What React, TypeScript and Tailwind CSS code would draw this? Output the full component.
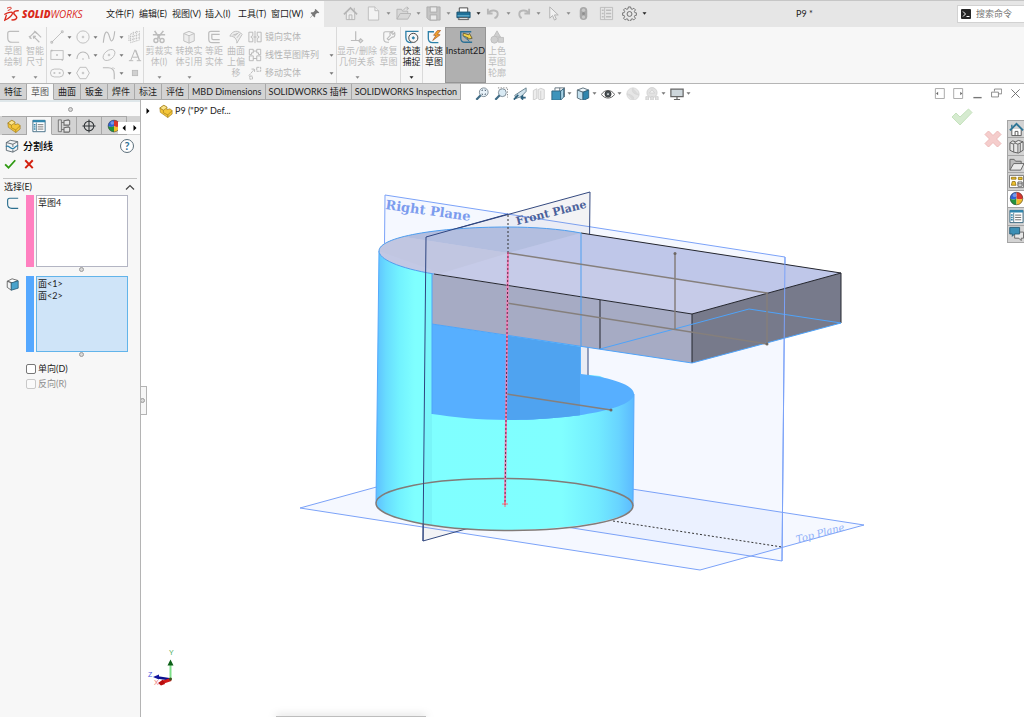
import type { ReactNode } from "react";
import clsx from "clsx";

type IconProps = { children: ReactNode; className?: string };

const Icon = ({ children, className = "size-4" }: IconProps) => (
  <svg
    viewBox="0 0 16 16"
    fill="none"
    stroke="currentColor"
    className={clsx("block shrink-0", className)}
    aria-hidden="true"
  >
    {children}
  </svg>
);

const Caret = ({ className = "text-[#777777]" }: { className?: string }) => (
  <svg viewBox="0 0 5 3" className={clsx("block h-[3px] w-[5px] shrink-0", className)} aria-hidden="true">
    <path d="M0.5 0.3h4L2.5 2.8z" fill="currentColor" />
  </svg>
);

const Divider = () => <div className="w-px shrink-0 self-stretch bg-[#dadada]" />;

/* ---------- icons ---------- */

const LogoMark = () => (
  <svg viewBox="0 0 30 32" className="block h-4 w-[15px] shrink-0" fill="none" stroke="#da291c" aria-hidden="true">
    <path d="M6 4.500c5-2.500 9-2.500 8.500 0-.5 2-3.500 3.500-7 4.500" strokeWidth="2" />
    <path d="M.5 17C7 14 12 12 15 12.500c3.500.8 1.500 5-2 8.500-3 3-7 5.500-11.500 7.500L5 17.500" strokeWidth="2.600" />
    <path d="M29.500 9.500c-6-.8-10 1-10 4.500 0 4 6 5 6 9 0 3.500-5 5.500-10.500 4.500" strokeWidth="3" />
  </svg>
);

const icons = {
  pin: (
    <g fill="#777" stroke="none">
      <path d="M9.500 1.500l5.500 5-1.500 1-1.800-.3-2.700 2.600.1 2.700-1.200 1.200-2.700-2.700L1.800 14.500 1.500 14l3.500-4L2.300 7.300l1.200-1.200 2.700.1 2.500-2.500-.2-1.500z" />
    </g>
  ),
  home: (
    <g stroke="#b4b4b4">
      <path d="M3.500 7.500v7h9v-7" fill="#ededed" />
      <path d="M6.500 14.500v-5h3v5M12 2v3" />
      <path d="M1 9l7-7 7 7" strokeWidth="1.800" />
    </g>
  ),
  page: (
    <g stroke="#bdbdbd" fill="#f3f3f3">
      <path d="M2.500 1h7L13.500 5v10h-11z" />
      <path d="M9.500 1v4h4" />
    </g>
  ),
  open: (
    <g stroke="#b4b4b4" fill="#d8d8d8">
      <path d="M1 14V3.500h5l1 2h5.500v3M1 14l3.500-6H16l-3.500 6z" />
      <path d="M8 4.500c1-2.500 3-3 5-2M11.500 .8l2 1.800-2.200 1.500" fill="none" />
    </g>
  ),
  save: (
    <g stroke="#adadad" fill="#c4c4c4">
      <path d="M1 1h14v14H3.500L1 12.500z" />
      <path d="M4.500 1h7v5.500h-7zM4.500 9.500h7V15h-7z" fill="#eaeaea" />
    </g>
  ),
  print: (
    <>
      <path d="M3.500 7V2h9v5" fill="#fff" stroke="#444" />
      <path d="M1 6.500h14v6H1z" fill="#1f7199" stroke="#174f6d" />
      <path d="M1.500 10.500h13" stroke="#7cc3e0" />
      <path d="M3.500 12.500h9l1 2h-11z" fill="#fff" stroke="#555" />
    </>
  ),
  undo: (
    <path d="M2 3v5h5M2.500 7.500C5 3.500 12.500 4 12.500 8.500c0 2.500-1.500 4-3.500 4.500" stroke="#b7b7b7" strokeWidth="2" />
  ),
  redo: (
    <path d="M14 3v5H9M13.500 7.500C11 3.500 3.500 4 3.500 8.500c0 2.500 1.500 4 2.500 4.500" stroke="#b7b7b7" strokeWidth="2" />
  ),
  cursor: <path d="M4 1v12l3-2.800 2 4.800 2-1-2-4.500h4z" stroke="#b0b0b0" fill="#f1f1f1" />,
  traffic: (
    <g stroke="none">
      <rect x="4" y="1" width="8" height="14" rx="4" fill="#a9a9a9" />
      <circle cx="8" cy="4.500" r="1.800" fill="#c9c9c9" />
      <circle cx="8" cy="8.200" r="1.500" fill="#8f8f8f" />
      <circle cx="8" cy="11.800" r="1.800" fill="#c9c9c9" />
    </g>
  ),
  options: (
    <g stroke="#bcbcbc">
      <path d="M1.500 1.500h13v13h-13zM6 1.500v13" />
      <path d="M3 4.500h2M3 8h2M3 11.500h2M7.500 4.500H13M7.500 8H13M7.500 11.500H13" strokeWidth="1.500" />
    </g>
  ),
  gear: (
    <g stroke="#6a6a6a">
      <path d="M6.800 1h2.400l.4 2 1.300.5 1.700-1.100 1.700 1.700-1.100 1.700.5 1.300 2 .4v2.200l-2 .4-.5 1.300 1.100 1.700-1.700 1.700-1.700-1.100-1.300.5-.4 2H6.800l-.4-2-1.300-.5-1.700 1.100-1.700-1.700 1.100-1.700-.5-1.300-2-.4V7.500l2-.4.5-1.300-1.100-1.700 1.700-1.700 1.700 1.100L6.400 3z" />
      <circle cx="8" cy="8.500" r="2.600" />
    </g>
  ),
  sketch: <path d="M15 1.500H4.500Q2 1.500 2 4v5q0 5 5 5h8" strokeWidth="1.400" />,
  dimension: (
    <path d="M1.500 8.500L8 2M8.500 2l6.500 6.500M1 7l3 3M4 10l-2.500-1.500M13 14L6 7M6 7l.5 3M6 7l3 .3M7 1l3 3" strokeWidth="1.300" />
  ),
  line: <path d="M2 14L14 2M1 13h2v2H1zM13 1h2v2h-2z" />,
  circle: (
    <>
      <circle cx="8" cy="8" r="7" />
      <circle cx="8" cy="8" r="1" />
    </>
  ),
  spline: <path d="M1.500 14.500C2.500 5 4 .5 6.500 3S9 13 11 12.500s3-5 3.500-11" strokeWidth="1.300" />,
  plane: (
    <path d="M3 4.500l10-3v10l-10 3zM1 6v7M6 2v11M9.500 1v11M2 8l12-3M2 11.500l12-3" strokeDasharray="1.500 1" />
  ),
  rect: (
    <>
      <rect x="1" y="3" width="14" height="10" />
      <path d="M7 8h2M14 12.500v2M2 2v2" strokeWidth="1.500" />
    </>
  ),
  arc: <path d="M1 12.500a7 8 0 0 1 14 0M7 12.500h2" strokeWidth="1.200" />,
  ellipse: (
    <>
      <ellipse cx="8" cy="8" rx="7.800" ry="5" transform="rotate(-40 8 8)" />
      <circle cx="8" cy="8" r="1" />
    </>
  ),
  letter: <path d="M1 14.500h5M10 14.500h5M3 14.500L8 2l5 12.500M5 10.500h6M9 2.500l4 11" strokeWidth="1.100" />,
  slot: (
    <>
      <rect x=".5" y="3.500" width="15" height="9" rx="4.500" />
      <path d="M4 8h2M10 8h2" strokeWidth="1.500" />
    </>
  ),
  polygon: (
    <>
      <path d="M4.500 1.500h7L15.300 8l-3.800 6.500h-7L.7 8z" />
      <circle cx="8" cy="8" r="1" />
    </>
  ),
  fillet: <path d="M1 2h6q7 0 7 7v6M14 2.500v1M12 2h1" strokeWidth="1.300" />,
  point: <rect x="5" y="5" width="6" height="6" fill="#d0d0d0" />,
  trim: (
    <>
      <path d="M3 1l6 9M13 1L6 10M1 5.500h14" strokeWidth="1.800" />
      <circle cx="4.500" cy="12" r="2.300" strokeWidth="1.600" />
      <circle cx="11.500" cy="12" r="2.300" strokeWidth="1.600" />
    </>
  ),
  convert: <path d="M2 4l6-2.500L14 4v8.500L8 15l-6-2.500zM2 4l6 2.500L14 4M8 6.500V15" fill="#ededed" />,
  offset: <path d="M14.500 1.500H4.500Q2 1.500 2 4v6.500q0 4 4 4h8.500M14.500 5H5.500v4.500Q5.500 11 7 11h7.500" strokeWidth="1.400" />,
  surface: <path d="M1 7c3-7 10-7 14-2l-6 10c0-5-3-8-8-8zM6 7l5-4M9 9l4-5M4 6l6-2" fill="#eeeeee" />,
  mirror: <path d="M1 2.500h4.500v4l-2 1v1l2 1v4H1zM15 2.500h-4.500v4l2 1v1l-2 1v4H15zM8 1v14M6 8h4" />,
  pattern: (
    <path d="M1.500 1.500H6v4H4v2H1.500zM10 1.500h4.500v6H12v-2h-2zM1.500 9H6v5.500H1.500zM10 9h4.500v5.500H10zM6 3.500h4M6 12h4" />
  ),
  move: <path d="M1 11l6-7M4 3.500h3.500V7M10 1.500h4.500v4.500H10zM2 11.500h3V15H2z" strokeDasharray="3 .7" />,
  relation: <path d="M6.500 1.500v10M1 12h11M12 10l2.500 2.200L12 14.500l-2-2.300z" strokeWidth="1.400" />,
  repair: (
    <path d="M10 2H4Q2 2 2 4v6q0 4 4 4h2M14.500 3l-2 2-1.500-1.500 1.500-2C9 1.500 8.500 4 9.500 6L6 10l1.500 1.500L11.500 8c2 .5 4-1 3-5z" strokeWidth="1.300" />
  ),
  snap: (
    <>
      <path d="M15.500 1.500H1v7q0 6 6.500 6" stroke="#2c7fa8" strokeWidth="1.500" />
      <circle cx="9.500" cy="9" r="5.200" stroke="#333" />
      <circle cx="9.500" cy="9" r="1.200" fill="#2c7fa8" stroke="#2c7fa8" />
    </>
  ),
  rapid: (
    <>
      <path d="M8 2H1.500v7.500q0 5 5 5H13" stroke="#2c7fa8" strokeWidth="1.500" />
      <path d="M12 .5L7.500 6l2.700.3L6.500 12l8.500-6.500-3.200-.5L15.500.5z" fill="#f3a229" stroke="#a3572b" strokeWidth=".8" />
    </>
  ),
  instant: (
    <>
      <path d="M14 2H2v7q0 5 5 5h8" stroke="#2a7095" strokeWidth="1.500" />
      <path d="M5 3.500l6 2 1-1.500 3 5.500-5.500 1 1-1.500L4.500 6.500z" fill="#f1d34c" stroke="#4a4424" strokeWidth=".8" />
      <path d="M5 7l7 6" stroke="#2a7095" />
    </>
  ),
  shaded: (
    <g fill="#cfcfcf" stroke="#bdbdbd">
      <path d="M8 1l4 7H4z" />
      <circle cx="5" cy="11" r="4" />
      <path d="M9.500 8.500h6V14h-6z" />
    </g>
  ),
  zoomFit: (
    <>
      <circle cx="10" cy="6" r="5" stroke="#77858f" fill="#e7f1f8" />
      <path d="M1.500 14.500l5-5" stroke="#3f6c86" strokeWidth="2.500" />
      <path d="M8 4.500v-1h1M11 3.500h1v1M12 7.500v1h-1M9 8.500H8v-1" stroke="#456" />
    </>
  ),
  zoomArea: (
    <>
      <path d="M4.500 1h11v11" stroke="#777" strokeDasharray="1.500 1.500" />
      <circle cx="9.500" cy="6.500" r="4.500" stroke="#77858f" fill="#d9eaf4" />
      <path d="M1.500 14.500l5-5" stroke="#3f6c86" strokeWidth="2.500" />
    </>
  ),
  prevView: (
    <>
      <path d="M15 1l-7 4.500-6 4 1.500 3.500 6-2L15 5z" fill="#cfe2ec" stroke="#5e7886" />
      <path d="M1 14.500L6 9M14.500 12H9M9 12l2.500-2.500M9 12l2.500 2.500" stroke="#30637f" strokeWidth="2" />
    </>
  ),
  section: <path d="M1.500 4l4-2v11l-4 2zM7 3l3-1.500 4 1.500v10.500l-4 1.500-3-1.500zM10 4.500V15" stroke="#cccccc" fill="#ededed" />,
  orient: (
    <>
      <path d="M4.500 1h11v10.500M4.500 1v3M15.500 1l-4 3.500M10 1v4M8 8h7.500" stroke="#566873" />
      <path d="M1 4.500h10V15H1z" fill="#3d94bb" stroke="#2b5f79" />
      <path d="M11 4.500l3.500-2.500v9.500L11 15z" fill="#a9d3e6" stroke="#2b5f79" />
    </>
  ),
  display: (
    <>
      <path d="M1.500 3.500L8 1l6.500 2.500L8 6z" fill="#eef7fb" stroke="#4f6470" />
      <path d="M1.500 3.500L8 6v9.500l-6.500-3z" fill="#c3e0ee" stroke="#4f6470" />
      <path d="M14.500 3.500L8 6v9.500l6.500-3z" fill="#2f86ae" stroke="#2b5f79" />
    </>
  ),
  eye: (
    <>
      <path d="M.5 8.500C4 2.500 12 2.500 15.500 8.500 12 14 4 14 .5 8.500z" stroke="#555" fill="#fff" />
      <circle cx="8" cy="8" r="3.500" fill="#4a5358" stroke="#333" />
      <circle cx="8" cy="8" r="1" fill="#fff" stroke="none" />
    </>
  ),
  ball: (
    <g stroke="#d6d6d6">
      <circle cx="8" cy="8" r="7" fill="#e6e6e6" />
      <path d="M8 1C6 5 8 8 15 9M8 15C10 12 8 9 1 8" fill="#dadada" />
    </g>
  ),
  scene: (
    <g stroke="#d0d0d0" fill="#e2e2e2">
      <circle cx="8" cy="6.500" r="5.800" />
      <path d="M1 11h3v4H1zM6.500 11h3v4h-3zM12 11h3v4h-3z" />
      <path d="M5 7l3-4 3 4z" fill="#f1f1f1" />
    </g>
  ),
  monitor: (
    <>
      <path d="M1 2.500h14v8.500H1z" fill="#cdd6db" stroke="#666" strokeWidth="1.400" />
      <path d="M8 11v3M4.500 14.500h7" stroke="#666" strokeWidth="1.400" />
    </>
  ),
  part: (
    <g stroke="#9a7413" strokeWidth=".7">
      <path d="M1 4.500l4.500-3L9 3.500v3l3.500-1 2.500 2v4L10 15.500l-8.500-6z" fill="#f4c63a" />
      <path d="M1 4.500l4 2.500v3l5 2.500 5-5" fill="none" />
      <path d="M10 12.500v3" />
      <path d="M5 7l4-2.500v-1l-3.500-2-4.500 3z" fill="#fbe48a" />
    </g>
  ),
  property: (
    <>
      <path d="M1 1.500h14v13H1z" fill="#fff" stroke="#37657e" />
      <path d="M1 2.500h14" stroke="#2f86ae" strokeWidth="2.500" />
      <path d="M5 4v10" stroke="#5e7d8e" />
      <path d="M2 6.500h2M2 9h2M2 11.500h2" stroke="#2f86ae" strokeWidth="1.600" />
      <path d="M6.500 6.500H13M6.500 9H13M6.500 11.500H13" stroke="#666" />
    </>
  ),
  config: (
    <g stroke="#6b6b6b">
      <path d="M1.500 1h3.500v13.500H1.500zM5 4h3M5 12h3" fill="#dedede" />
      <path d="M8 2l5-1 1.500 1v4l-1 1H8zM8 10l5-1 1.500 1v4l-1 1H8z" fill="#e4e4e4" strokeWidth="1.200" />
    </g>
  ),
  target: (
    <g stroke="#2f3336" strokeWidth="1.200">
      <circle cx="8" cy="8" r="5.500" />
      <path d="M8 .5v15M.5 8h15" />
    </g>
  ),
  sphere: (
    <g stroke="none">
      <path d="M8 1a7 7 0 0 0-7 7q4 2 7 0z" fill="#2f62d8" />
      <path d="M8 1a7 7 0 0 1 7 7q-4 2-7 0z" fill="#d9352c" />
      <path d="M1 8a7 7 0 0 0 7 7V8q-3 2-7 0z" fill="#22933c" />
      <path d="M15 8a7 7 0 0 1-7 7V8q3 2 7 0z" fill="#f0bd2b" />
      <circle cx="6" cy="4.500" r="2" fill="#fff" opacity=".35" />
      <circle cx="8" cy="8" r="6.700" fill="none" stroke="#444" strokeWidth=".6" />
    </g>
  ),
  split: (
    <>
      <path d="M1.500 4L6 1.500l8.500 1.500v9L9 15l-7.500-2z" fill="#f2f4f5" stroke="#55616a" />
      <path d="M1.500 4L9 6l5.500-3M9 6v3M9 12v3" stroke="#55616a" />
      <path d="M1 8.500c3-2 5.500 3 8 2.500s3-3.500 6-3.500" stroke="#2c7fa8" strokeWidth="1.500" />
    </>
  ),
  face: (
    <>
      <path d="M1.500 4l6-3 7 2-6 3z" fill="#fff" stroke="#555" />
      <path d="M1.500 4l5 2v9l-5-3.500z" fill="#f3f5f6" stroke="#555" />
      <path d="M6.500 6l8.500-2.500v9L6.500 15z" fill="#4aa3cc" stroke="#2b5f79" />
    </>
  ),
  houseBlue: (
    <>
      <path d="M3 7.500v7h10v-7" fill="#fff" stroke="#555" />
      <path d="M6.500 14.500V10h3v4.500" stroke="#555" />
      <path d="M1 9l7-7 7 7" stroke="#2d7596" strokeWidth="2" />
      <path d="M3 3v3" stroke="#2d7596" strokeWidth="1.500" />
    </>
  ),
  library: (
    <g stroke="#5f5f5f" fill="#e6e6e6">
      <path d="M1 4l3-2 3 1 3-1.500L15 3v9l-5 3-5-1-4-2z" />
      <path d="M1 4l4 1.500v8.500M5 5.500L7 3M9.500 5.500V15M9.500 5.500l-3-1M9.500 5.500L15 3M12 4.500V14" fill="none" />
    </g>
  ),
  folder: (
    <g stroke="#646464">
      <path d="M1 14V2.500h4.500l1.500 2h6v3" fill="#bcbcbc" />
      <path d="M1 14l4-7h11l-3.500 7z" fill="#eaeaea" />
    </g>
  ),
  palette: (
    <>
      <path d="M.5 1.500h15v13H.5z" fill="#fff" stroke="#777" />
      <path d="M2.500 3.500h5v2h-5zM10 3.500h4v2.500h-4zM3.500 8h3l1 4h-5z" fill="#f0c22e" stroke="#87680c" strokeWidth=".8" />
      <path d="M9.500 8.500H14V13H9.500zM9.500 10.500H14" stroke="#555" />
    </>
  ),
  forum: (
    <>
      <path d="M6 6.500h9.500v6.500H13v2.500L10.500 13H6z" fill="#e6e6e6" stroke="#666" />
      <path d="M.8 1.500h10.500v7H6L3.500 11V8.500H.8z" fill="#3c8fb5" stroke="#2b5f79" />
    </>
  ),
  panelLeft: (
    <>
      <path d="M2 .8h13v14.500H2z" stroke="#9a9a9a" strokeWidth="1.200" />
      <path d="M3 8l3-2.500v5z" fill="#666" stroke="none" />
    </>
  ),
  panelRight: (
    <>
      <path d="M1 .8h13v14.500H1z" stroke="#9a9a9a" strokeWidth="1.200" />
      <path d="M13.500 8l-3-2.500v5z" fill="#666" stroke="none" />
    </>
  ),
  minimize: <path d="M2 14h12" stroke="#777" strokeWidth="2" />,
  restore: <path d="M5 5V1.500h10.500v7H11M.8 6h10v7H.8z" stroke="#777" strokeWidth="1.200" />,
  close: <path d="M2 2l12 12M14 2L2 14" stroke="#666" strokeWidth="1.300" />,
};

type IconName = keyof typeof icons;

/* ---------- title bar ---------- */

const menus = ["文件(F)", "编辑(E)", "视图(V)", "插入(I)", "工具(T)", "窗口(W)"];

const quickTools: { icon: IconName; label: string; caret?: boolean; dark?: boolean }[] = [
  { icon: "home", label: "主页" },
  { icon: "page", label: "新建", caret: true },
  { icon: "open", label: "打开", caret: true },
  { icon: "save", label: "保存", caret: true },
  { icon: "print", label: "打印", caret: true, dark: true },
  { icon: "undo", label: "撤销", caret: true },
  { icon: "redo", label: "重做", caret: true },
  { icon: "cursor", label: "选择", caret: true },
  { icon: "traffic", label: "重建模型" },
  { icon: "options", label: "文件属性" },
  { icon: "gear", label: "选项", caret: true, dark: true },
];

const TitleBar = () => (
  <header className="flex h-[27px] shrink-0 items-stretch border-t border-[#c6c6c6] bg-[#e6e6e6]">
    <div className="flex w-[324px] shrink-0 items-center bg-[#f8f8f8] pb-px pl-1">
      <LogoMark />
      <span className="ml-[3px] w-[84px] font-['Open_Sans'] text-[10px] leading-3 italic text-[#da291c]">
        <b className="font-extrabold">SOLID</b>WORKS
      </span>
      <nav className="flex flex-1">
        {menus.map((menu) => (
          <button key={menu} className="w-[33px] shrink-0 text-left text-[9px] leading-3 whitespace-nowrap text-[#1c1c1c]">
            {menu}
          </button>
        ))}
      </nav>
      <button aria-label="固定菜单" className="mr-1">
        <Icon className="size-[11px]">{icons.pin}</Icon>
      </button>
    </div>
    <div className="flex shrink-0 items-center pb-px pl-[19px]">
      {quickTools.map(({ icon, label, caret, dark }) => (
        <button
          key={icon}
          aria-label={label}
          className={clsx("flex items-center", caret ? "w-[30px] gap-[5px]" : "w-[23px]")}
        >
          <Icon className="size-[15px]">{icons[icon]}</Icon>
          {caret && <Caret className={dark ? "text-[#222222]" : "text-[#8a8a8a]"} />}
        </button>
      ))}
    </div>
    <h1 className="flex flex-1 items-center justify-center pb-px text-[9px] text-[#222222]">P9 *</h1>
    <label className="my-1 flex w-[67px] shrink-0 items-center border border-r-0 border-[#d2d2d2] bg-white pl-[3px]">
      <svg viewBox="0 0 10 10" className="block size-[10px] shrink-0" aria-hidden="true">
        <rect width="10" height="10" rx="1" fill="#262626" />
        <path d="M2 2.500l2.500 2.500L2 7.500M5.500 7.500h3" fill="none" stroke="#fff" />
      </svg>
      <input
        aria-label="搜索命令"
        placeholder="搜索命令"
        className="ml-[5px] w-0 flex-1 text-[9px] leading-3 outline-none placeholder:text-[#777777]"
      />
    </label>
  </header>
);

/* ---------- ribbon ---------- */

type BigToolProps = {
  icon: IconName;
  lines: string[];
  width: string;
  caret?: boolean;
  enabled?: boolean;
  pressed?: boolean;
};

const BigTool = ({ icon, lines, width, caret, enabled, pressed }: BigToolProps) => (
  <button
    disabled={!enabled}
    className={clsx(
      "flex shrink-0 flex-col items-center pt-[2px] pb-1 text-[9px] leading-[11px] whitespace-nowrap",
      width,
      enabled ? "text-[#1c1c1c]" : "text-[#bcbcbc]",
      pressed && "bg-[#b0b0b0] outline outline-[#959595] -outline-offset-1"
    )}
  >
    <Icon className="my-[1px] size-[14px]">{icons[icon]}</Icon>
    {lines.map((line) => (
      <span key={line}>{line}</span>
    ))}
    {caret && (
      <span className="mt-auto">
        <Caret className={enabled ? "text-[#222222]" : "text-[#8a8a8a]"} />
      </span>
    )}
  </button>
);

const sketchRows: { icon: IconName; label: string; caret?: boolean }[][] = [
  [
    { icon: "line", label: "直线", caret: true },
    { icon: "circle", label: "圆", caret: true },
    { icon: "spline", label: "样条曲线", caret: true },
    { icon: "plane", label: "基准面" },
  ],
  [
    { icon: "rect", label: "矩形", caret: true },
    { icon: "arc", label: "圆弧", caret: true },
    { icon: "ellipse", label: "椭圆", caret: true },
    { icon: "letter", label: "文字" },
  ],
  [
    { icon: "slot", label: "槽口", caret: true },
    { icon: "polygon", label: "多边形" },
    { icon: "fillet", label: "圆角", caret: true },
    { icon: "point", label: "点" },
  ],
];

const entityTools: { icon: IconName; label: string; caret?: boolean }[] = [
  { icon: "mirror", label: "镜向实体" },
  { icon: "pattern", label: "线性草图阵列", caret: true },
  { icon: "move", label: "移动实体", caret: true },
];

const Ribbon = () => (
  <section className="flex h-14 shrink-0 items-stretch bg-[#f7f7f7] pl-[2px]">
    <BigTool icon="sketch" lines={["草图", "绘制"]} width="w-[22px]" caret />
    <BigTool icon="dimension" lines={["智能", "尺寸"]} width="w-[22px]" caret />
    <Divider />
    <div className="flex w-24 shrink-0 flex-col justify-center pl-[3px] text-[#b9b9b9]">
      {sketchRows.map((row, i) => (
        <div key={i} className="flex h-[18px] items-center">
          {row.map(({ icon, label, caret }) => (
            <button key={icon} disabled aria-label={label} className="flex w-[26px] shrink-0 items-center gap-[3px]">
              <Icon className="size-[14px]">{icons[icon]}</Icon>
              {caret && <Caret />}
            </button>
          ))}
        </div>
      ))}
    </div>
    <Divider />
    <BigTool icon="trim" lines={["剪裁实", "体(I)"]} width="w-[30px]" caret />
    <BigTool icon="convert" lines={["转换实", "体引用"]} width="w-[30px]" caret />
    <BigTool icon="offset" lines={["等距", "实体"]} width="w-5" />
    <BigTool icon="surface" lines={["曲面", "上偏", "移"]} width="w-6" />
    <div className="flex w-[88px] shrink-0 flex-col justify-center text-[9px] text-[#b4b4b4]">
      {entityTools.map(({ icon, label, caret }) => (
        <button key={icon} disabled className="flex h-[18px] items-center gap-[3px] pr-[2px] whitespace-nowrap">
          <Icon className="size-[14px]">{icons[icon]}</Icon>
          {label}
          {caret && (
            <span className="ml-auto">
              <Caret />
            </span>
          )}
        </button>
      ))}
    </div>
    <Divider />
    <BigTool icon="relation" lines={["显示/删除", "几何关系"]} width="w-10" caret />
    <BigTool icon="repair" lines={["修复", "草图"]} width="w-[23px]" />
    <Divider />
    <BigTool icon="snap" lines={["快速", "捕捉"]} width="w-[21px]" caret enabled />
    <Divider />
    <BigTool icon="rapid" lines={["快速", "草图"]} width="w-[22px]" enabled />
    <BigTool icon="instant" lines={["Instant2D"]} width="w-[41px]" enabled pressed />
    <BigTool icon="shaded" lines={["上色", "草图", "轮廓"]} width="w-[22px]" />
  </section>
);

/* ---------- command tabs and view toolbar ---------- */

const commandTabs = [
  "特征",
  "草图",
  "曲面",
  "钣金",
  "焊件",
  "标注",
  "评估",
  "MBD Dimensions",
  "SOLIDWORKS 插件",
  "SOLIDWORKS Inspection",
];

const viewTools: { icon: IconName; label: string; caret?: boolean }[] = [
  { icon: "zoomFit", label: "整屏显示全图" },
  { icon: "zoomArea", label: "局部放大" },
  { icon: "prevView", label: "上一视图" },
  { icon: "section", label: "剖面视图" },
  { icon: "orient", label: "视图定向", caret: true },
  { icon: "display", label: "显示样式", caret: true },
  { icon: "eye", label: "隐藏/显示项目", caret: true },
  { icon: "ball", label: "编辑外观" },
  { icon: "scene", label: "应用布景", caret: true },
  { icon: "monitor", label: "视图设定", caret: true },
];

const windowTools: { icon: IconName; label: string }[] = [
  { icon: "panelLeft", label: "左侧面板" },
  { icon: "panelRight", label: "右侧面板" },
  { icon: "minimize", label: "最小化" },
  { icon: "restore", label: "还原" },
  { icon: "close", label: "关闭" },
];

const CommandBar = () => (
  <div className="flex h-[17px] shrink-0 items-stretch border-t border-[#b5b5b5] bg-white">
    <div role="tablist" className="flex">
      {commandTabs.map((tab, i) => (
        <button
          key={tab}
          role="tab"
          aria-selected={i === 1}
          className={clsx(
            "shrink-0 border-r border-b border-[#a8a8a8] text-[9px] leading-[14px] whitespace-nowrap",
            i < 7 ? "w-[27px]" : "px-[3px]",
            i === 1 ? "border-b-transparent bg-[#f7f7f7] text-[#555555]" : "bg-[#d3d3d3] text-[#222222]"
          )}
        >
          {tab}
        </button>
      ))}
    </div>
    <div className="ml-auto flex w-[549px] items-center pt-[3px]">
      {viewTools.map(({ icon, label, caret }) => (
        <button
          key={icon}
          aria-label={label}
          className={clsx("flex shrink-0 items-center gap-[2px]", caret ? "w-[25px]" : "w-[19px]")}
        >
          <Icon className="size-[14px]">{icons[icon]}</Icon>
          {caret && <Caret />}
        </button>
      ))}
      <div className="ml-auto flex gap-2 pr-[3px]">
        {windowTools.map(({ icon, label }) => (
          <button key={icon} aria-label={label}>
            <Icon className="size-[11px]">{icons[icon]}</Icon>
          </button>
        ))}
      </div>
    </div>
  </div>
);

/* ---------- property manager ---------- */

const Grip = () => (
  <span className="block size-[5px] shrink-0 rounded-full border border-[#9b9b9b] bg-[#d8d8d8]" />
);

const managerTabs: { icon: IconName; label: string }[] = [
  { icon: "part", label: "FeatureManager" },
  { icon: "property", label: "PropertyManager" },
  { icon: "config", label: "ConfigurationManager" },
  { icon: "target", label: "DimXpertManager" },
  { icon: "sphere", label: "DisplayManager" },
];

type SelectionBoxProps = {
  icon: IconName;
  label: string;
  items: string[];
  active?: boolean;
};

const SelectionBox = ({ icon, label, items, active }: SelectionBoxProps) => (
  <div className={clsx("flex", active ? "h-[76px]" : "h-[72px]")}>
    <div className="w-5 shrink-0 pt-[2px] text-[#2c6f8f]">
      <Icon className="size-[13px]">{icons[icon]}</Icon>
    </div>
    <div className={clsx("mr-[2px] w-2 shrink-0", active ? "bg-[#55a8ff]" : "bg-[#ff80c0]")} />
    <select
      multiple
      aria-label={label}
      className={clsx(
        "h-full w-0 flex-1 overflow-hidden border px-px text-[9px] outline-none",
        active ? "border-[#62b4ea] bg-[#cfe4f8]" : "border-[#b3b5c3] bg-white"
      )}
    >
      {items.map((item) => (
        <option key={item} className="h-3 min-h-0 p-0 leading-3 text-[#222222]">
          {item}
        </option>
      ))}
    </select>
  </div>
);

const PropertyManager = () => (
  <aside className="flex w-[141px] shrink-0 flex-col border-r border-[#b4b4b4] bg-[#f7f7f7] text-[9px] text-[#222222]">
    <div className="flex h-4 shrink-0 items-center justify-center border-t-2 border-[#dfe7ea] bg-[#fafafa]">
      <Grip />
    </div>
    <div role="tablist" className="relative flex h-[19px] shrink-0 overflow-hidden bg-[#d3d3d3] pl-[2px]">
      {managerTabs.map(({ icon, label }, i) => (
        <button
          key={icon}
          role="tab"
          aria-label={label}
          aria-selected={i === 1}
          className={clsx(
            "flex h-full w-[25px] shrink-0 items-center justify-center border-t border-r border-b border-[#a8a8a8]",
            i === 1 && "border-b-transparent bg-[#f7f7f7]"
          )}
        >
          <Icon className="size-[14px]">{icons[icon]}</Icon>
        </button>
      ))}
      <div className="absolute right-0 bottom-px flex h-3 w-[22px] items-center justify-around bg-white">
        <button aria-label="向左滚动">
          <svg viewBox="0 0 4 6" className="block h-[6px] w-1">
            <path d="M3.500 0v6L.5 3z" />
          </svg>
        </button>
        <button aria-label="向右滚动">
          <svg viewBox="0 0 4 6" className="block h-[6px] w-1">
            <path d="M.5 0v6l3-3z" />
          </svg>
        </button>
      </div>
    </div>
    <div className="flex h-[22px] items-center pr-[6px] pl-[5px]">
      <Icon className="size-[14px]">{icons.split}</Icon>
      <h2 className="ml-1 text-[10px] font-medium text-black">分割线</h2>
      <button
        aria-label="帮助"
        className="ml-auto size-[14px] rounded-full border border-[#5c6f7b] bg-white text-[11px] leading-3 font-bold text-[#2f7196]"
      >
        ?
      </button>
    </div>
    <div className="flex h-[21px] items-start gap-[7px] pt-px pl-1">
      <button aria-label="确定">
        <Icon className="size-3">
          <path d="M1.500 8.500l4.500 4.500L15 3" stroke="#2f9a12" strokeWidth="2.400" />
        </Icon>
      </button>
      <button aria-label="取消">
        <Icon className="size-3">
          <path d="M3 3l10 10.500M13 3L3 13.500" stroke="#d3200f" strokeWidth="2.600" />
        </Icon>
      </button>
    </div>
    <div className="mr-[3px] ml-[3px] flex h-[17px] items-center justify-between border-t border-[#c4c4c4] pr-[2px] pl-px">
      <h3>选择(E)</h3>
      <button aria-label="折叠">
        <svg viewBox="0 0 10 6" className="block h-[6px] w-[10px]" fill="none" stroke="#444">
          <path d="M1 5.500l4-4 4 4" strokeWidth="1.200" />
        </svg>
      </button>
    </div>
    <div className="flex flex-col pr-3 pl-[6px]">
      <SelectionBox icon="sketch" label="草图选择" items={["草图4"]} />
      <div className="flex h-[9px] items-start justify-center pl-7">
        <Grip />
      </div>
      <SelectionBox icon="face" label="面选择" items={["面<1>", "面<2>"]} active />
      <div className="flex h-[9px] items-start justify-center pl-7">
        <Grip />
      </div>
      <label className="flex h-[15px] items-center gap-[2px] pl-5">
        <input type="checkbox" className="size-[10px] appearance-none rounded-[2px] border border-[#777777] bg-white" />
        单向(D)
      </label>
      <label className="flex h-[15px] items-center gap-[2px] pl-5 text-[#8e8e8e]">
        <input
          type="checkbox"
          disabled
          className="size-[10px] appearance-none rounded-[2px] border border-[#c9c9c9] bg-[#fafafa]"
        />
        反向(R)
      </label>
    </div>
  </aside>
);

/* ---------- graphics area ---------- */

const Model = () => (
  <svg
    viewBox="141 100 883 617"
    preserveAspectRatio="xMinYMin meet"
    className="block h-full w-full"
    role="img"
    aria-label="P9"
    fill="none"
  >
    <defs>
      <linearGradient id="side" gradientUnits="userSpaceOnUse" x1="376" x2="634" y1="0" y2="0">
        <stop offset="0" stopColor="#5ec0ff" />
        <stop offset="0.04" stopColor="#68dcff" />
        <stop offset="0.09" stopColor="#72f2ff" />
        <stop offset="0.15" stopColor="#7fffff" />
        <stop offset="0.72" stopColor="#80ffff" />
        <stop offset="0.86" stopColor="#72ebff" />
        <stop offset="0.94" stopColor="#68d4ff" />
        <stop offset="1" stopColor="#5cb9ff" />
      </linearGradient>
      <clipPath id="disc">
        <path d="M379 251C379 237 437 227 508 227C534 227 560 229 581 233L841 273L692 314L434 274C398 268 379 259 379 251z" />
      </clipPath>
      <clipPath id="step">
        <path d="M432 324L581 347V374C613 378 634 385 634 394C634 408 577 420 507 420C480 420 452 417 432 414z" />
      </clipPath>
    </defs>

    {/* reference planes */}
    <path d="M300 508L464 463L864 525L700 570z" fill="#f5f8ff" stroke="#7ba2f8" />
    <path d="M385 195L785 257L782 561L382 498z" fill="#6f9bff" fillOpacity="0.07" stroke="#7ba2f8" />
    <path d="M426 237L590 192L587 495L423 541z" fill="#8c8ca0" fillOpacity="0.1" stroke="#34497f" />
    <path d="M613 521L782 547" stroke="#333" strokeDasharray="2 2" />

    {/* cylinder */}
    <path
      d="M379 251L376 503C376 518 434 530 504 530C575 530 633 519 633 506L634 394L581 347L432 274z"
      fill="url(#side)"
    />
    <path d="M581 340V374L600 376L640 396V340z" fill="#f5f8ff" />
    <path d="M581 340H588V375H581z" fill="#eaecf4" />
    <path d="M588 340V375" stroke="#34497f" />
    <path d="M426 272H432V526L424 525z" fill="#62d8e6" fillOpacity="0.25" />
    <g clipPath="url(#step)">
      <path d="M430 320H640V422H430z" fill="#57afff" />
      <path d="M508 320H580V422H507z" fill="#4fa3f0" />
    </g>
    <path d="M379 251L376 503M634 394L633 506" stroke="#55a9fb" />
    <ellipse cx="504.500" cy="504.500" rx="128.500" ry="26" stroke="#827b78" strokeWidth="1.500" transform="rotate(0.600 504.500 504.500)" />

    {/* block */}
    <g clipPath="url(#disc)">
      <path d="M370 220H850V320H370z" fill="#c6cbe8" />
      <path d="M508 253L581 233L620 220H850V306z" fill="#bfc7e9" />
      <path d="M370 220L385 234L508 253L443 273L370 290z" fill="#c3c8e4" />
      <path d="M385 234L508 253L581 233L560 220H385z" fill="#b3bedf" />
      <path d="M379 251L441 273L508 253L385 234z" fill="#c1c6e1" />
    </g>
    <path d="M432 274L692 314V363L432 324z" fill="#a6abc4" />
    <path d="M692 314L841 273V323L692 363z" fill="#777a8b" />
    <path d="M581 233L841 273V323M434 274L692 314L841 273M692 314V363M600 300V349" stroke="#24262e" />
    <path d="M434 274C398 268 379 259 379 251C379 237 437 227 508 227C534 227 560 229 581 233V347" stroke="#4f9ff0" />
    <path d="M432 324L692 363L841 323L749 309L600 349M432 274V414" stroke="#4ea3fa" />

    {/* plane outlines that run in front of the body */}
    <path d="M423 541L426 237L508 214" stroke="#2d4480" />
    <path d="M785 257L782 561" stroke="#7ba2f8" />

    {/* sketch lines */}
    <g stroke="#857f7c" strokeWidth="1.500">
      <path d="M508 253L767 293V344L507 303M675 253V329" />
      <path d="M507 394L611 410" />
    </g>
    <g fill="#6d6865">
      <circle cx="675" cy="253.500" r="1.500" />
      <circle cx="767" cy="344" r="1.500" />
      <circle cx="611" cy="410" r="1.500" />
    </g>
    <path d="M508 215V252" stroke="#333" strokeDasharray="2 2" />
    <path d="M508 252L505 505" stroke="#f77fb6" strokeWidth="2" />
    <path d="M508 252L505 505" stroke="#5c2c48" strokeDasharray="2 2" />
    <path d="M502 504h6M505 501v6" stroke="#f06a78" />

    <g fontFamily="'DejaVu Serif', serif" fontWeight="bold">
      <text x="385" y="209" fontSize="13" fill="#7c9cee" transform="rotate(8 385 209)">
        Right Plane
      </text>
      <text x="517" y="225" fontSize="11" fill="#4a609a" transform="rotate(-14 517 225)">
        Front Plane
      </text>
      <text x="797" y="543" fontSize="10" fontStyle="italic" fontWeight="normal" fill="#8fb0f8" transform="rotate(-15 797 543)">
        Top Plane
      </text>
    </g>

    {/* triad */}
    <g fontFamily="'Liberation Sans', sans-serif" fontSize="7">
      <path d="M170.500 679V662" stroke="#7ee08a" strokeWidth="2" />
      <path d="M167.500 665.500h6l-3-6z" fill="#0d5f18" />
      <path d="M171 679.500l-13-2" stroke="#0b108f" strokeWidth="2.500" />
      <path d="M153 677l6-2.500v5z" fill="#10149c" />
      <path d="M171 679.500l-9 3" stroke="#d31a1a" strokeWidth="3" />
      <path d="M158 683l5-3.500 2 4.500-4 1.500z" fill="#b90d0d" />
      <circle cx="170.500" cy="679" r="1.500" fill="#3b4f1c" />
      <text x="169" y="655" fill="#4fae5b">Y</text>
      <text x="148" y="677" fill="#4a55e0">Z</text>
      <text x="154" y="685" fill="#e77">X</text>
    </g>
  </svg>
);

const taskPane: { icon: IconName; label: string }[] = [
  { icon: "houseBlue", label: "SOLIDWORKS 资源" },
  { icon: "library", label: "设计库" },
  { icon: "folder", label: "文件探索器" },
  { icon: "palette", label: "视图调色板" },
  { icon: "sphere", label: "外观" },
  { icon: "property", label: "自定义属性" },
  { icon: "forum", label: "论坛" },
];

const Viewport = () => (
  <main className="relative min-h-0 flex-1 overflow-hidden bg-white">
    <Model />
    <button className="absolute top-1 left-[5px] flex items-center text-[9px] leading-[14px] text-[#222222]">
      <svg viewBox="0 0 4 6" className="block h-[6px] w-1" aria-hidden="true">
        <path d="M.5 0v6l3-3z" />
      </svg>
      <Icon className="mr-[2px] ml-[9px] size-[14px]">{icons.part}</Icon>
      P9 ("P9" Def...
    </button>
    <button
      aria-label="折叠面板"
      className="absolute top-[286px] -left-px flex h-[29px] w-[7px] items-center border border-l-0 border-[#b4b4b4] bg-[#f7f7f7]"
    >
      <Grip />
    </button>
    <button aria-label="确认" className="absolute top-2 right-[51px]">
      <svg viewBox="0 0 22 18" className="block h-[18px] w-[22px]">
        <path d="M1 9l4-4 4 4 8.500-8L21 4.500 9 17z" fill="#d6ebd0" stroke="#c5e2bd" />
      </svg>
    </button>
    <button aria-label="放弃" className="absolute top-[30px] right-[22px]">
      <svg viewBox="0 0 18 18" className="block size-[18px]">
        <path
          d="M4.500 1L9 5.500 13.500 1 17 4.500 12.500 9l4.500 4.500-3.500 3.500L9 12.500 4.500 17 1 13.500 5.500 9 1 4.500z"
          fill="#f5cdcc"
          stroke="#edbab9"
          strokeLinejoin="round"
        />
      </svg>
    </button>
    <div className="absolute top-5 right-0 flex h-[123px] w-[17px] flex-col border-t border-l border-[#a5a5a5]">
      {taskPane.map(({ icon, label }) => (
        <button
          key={icon}
          aria-label={label}
          className={clsx(
            "flex w-full flex-1 items-center border-b border-[#a5a5a5] pl-px",
            icon === "sphere" ? "bg-white" : "bg-[#d3d3d3]"
          )}
        >
          <Icon className="size-[15px]">{icons[icon]}</Icon>
        </button>
      ))}
    </div>
    <div className="absolute -bottom-px left-[135px] h-[2px] w-[150px] bg-[#bdbdbd] shadow-[0_0_8px_#aaaaaa]" />
  </main>
);

export default function App() {
  return (
    <div className="flex h-screen flex-col overflow-hidden bg-white font-['Lato','Noto_Sans_CJK_SC',sans-serif]">
      <TitleBar />
      <Ribbon />
      <CommandBar />
      <div className="flex min-h-0 flex-1">
        <PropertyManager />
        <Viewport />
      </div>
    </div>
  );
}
